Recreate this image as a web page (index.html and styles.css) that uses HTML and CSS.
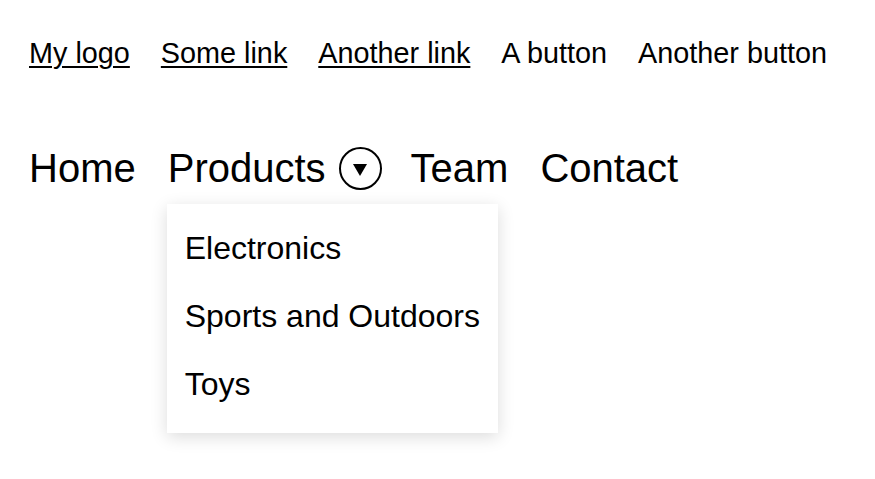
FILE: index.html
```html
<!DOCTYPE html>
<html lang="en">
<head>
<meta charset="utf-8">
<title>Menu</title>
<link rel="stylesheet" href="styles.css">
</head>
<body>
<div class="page">
  <nav class="top-nav">
    <a href="#" class="top-link">My logo</a>
    <a href="#" class="top-link">Some link</a>
    <a href="#" class="top-link">Another link</a>
    <button class="top-btn" type="button">A button</button>
    <button class="top-btn" type="button">Another button</button>
  </nav>
  <ul class="main-nav">
    <li class="main-item">Home</li>
    <li class="main-item has-menu">
      <span>Products</span>
      <button class="toggle" type="button" aria-label="Toggle products">
        <svg width="14" height="12" viewBox="0 0 14 12"><polygon points="0,0 14,0 7,12" fill="#000"/></svg>
      </button>
      <ul class="dropdown">
        <li class="drop-item">Electronics</li>
        <li class="drop-item">Sports and Outdoors</li>
        <li class="drop-item">Toys</li>
      </ul>
    </li>
    <li class="main-item">Team</li>
    <li class="main-item">Contact</li>
  </ul>
</div>
</body>
</html>
```
FILE: styles.css
```css
* { box-sizing: border-box; }
html, body {
  min-height: 100%;
}
body {
  margin: 0;
  min-height: 100vh;
  background: #fff;
  color: #000;
  font-family: "Liberation Sans", Arial, sans-serif;
}
.page {
  min-height: 100vh;
  padding: 37px 29px;
}
.top-nav {
  display: flex;
  align-items: baseline;
  gap: 31px;
  font-size: 28.8px;
  line-height: 33px;
}
.top-link {
  color: #000;
  text-decoration: underline;
  text-underline-offset: 3px;
  text-decoration-thickness: 2px;
}
.top-btn {
  font: inherit;
  color: #000;
  background: none;
  border: none;
  padding: 0;
  margin: 0;
}
.main-nav {
  list-style: none;
  margin: 75px 0 0;
  padding: 0;
  display: flex;
  align-items: center;
  gap: 32px;
  font-size: 40px;
  line-height: 46px;
}
.main-item {
  display: flex;
  align-items: center;
}
.has-menu {
  position: relative;
}
.toggle {
  margin-left: 13px;
  margin-right: -3px;
  width: 43px;
  height: 43px;
  border: 2px solid #000;
  border-radius: 50%;
  background: #fff;
  padding: 0;
  display: flex;
  align-items: center;
  justify-content: center;
}
.toggle svg {
  display: block;
  margin-top: 4px;
}
.dropdown {
  position: absolute;
  left: -1px;
  top: 59px;
  margin: 0;
  list-style: none;
  padding: 10px 0 15px;
  background: #fff;
  box-shadow: 0 4px 16px rgba(0, 0, 0, 0.14);
  font-size: 32px;
  line-height: 36px;
  white-space: nowrap;
}
.drop-item {
  padding: 16px 18px;
}
```
